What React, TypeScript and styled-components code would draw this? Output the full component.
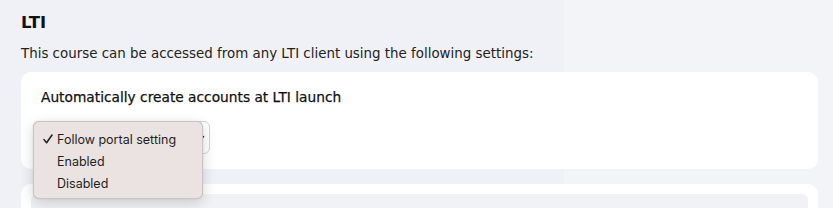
import styled, { createGlobalStyle } from "styled-components";

const GlobalStyle = createGlobalStyle`
  html, body {
    margin: 0;
    padding: 0;
  }
  body {
    background: linear-gradient(to right, #f0f1f6 0, #f0f1f6 564px, #f3f4f8 564px);
    font-family: "DejaVu Sans", "Open Sans", sans-serif;
    color: #1d1d1f;
  }
`;

const Page = styled.div`
  padding: 14px 15px 0 21px;
  height: 208px;
  box-sizing: border-box;
  overflow: hidden;
`;

const Heading = styled.h2`
  margin: 0;
  font-size: 16.5px;
  font-weight: 700;
  line-height: 18px;
  color: #111;
`;

const Intro = styled.p`
  margin: 13px 0 0;
  font-size: 13.4px;
  line-height: 18px;
  color: #222;
`;

const Card = styled.div`
  margin-top: 9px;
  background: #fff;
  border-radius: 10px;
  padding: 16px 20px 15px;
  position: relative;
`;

const Label = styled.div`
  font-size: 13.75px;
  font-weight: 400;
  line-height: 18px;
  color: #111;
  -webkit-text-stroke: 0.25px #111;
`;

const SelectWrap = styled.div`
  position: relative;
  margin-top: 15px;
  margin-left: -8px;
  width: 177px;
`;

const Select = styled.div`
  height: 33px;
  box-sizing: border-box;
  border: 1px solid #d5d5d8;
  border-radius: 6px;
  background: #fff;
  display: flex;
  align-items: center;
  justify-content: flex-end;
  padding-right: 4px;
  color: #222;
`;

const Menu = styled.ul`
  position: absolute;
  top: 0;
  left: 0;
  width: 170px;
  margin: 0;
  padding: 6px 0 4px;
  list-style: none;
  box-sizing: border-box;
  background: #ebe3e1;
  border: 1px solid rgba(0, 0, 0, 0.14);
  border-radius: 6px;
  box-shadow: 0 4px 14px rgba(0, 0, 0, 0.16), 0 0 2px rgba(0, 0, 0, 0.08);
  font-family: Inter, "Liberation Sans", sans-serif;
  font-size: 12.5px;
  color: #1f1f1f;
  z-index: 2;
`;

const Item = styled.li`
  display: flex;
  align-items: center;
  height: 22px;
  padding-left: 9px;
`;

const CheckSlot = styled.span`
  display: inline-flex;
  align-items: center;
  width: 14px;
  height: 22px;
`;

const options = ["Follow portal setting", "Enabled", "Disabled"];

const Card2 = styled.div`
  margin-top: 15px;
  background: #fff;
  border-radius: 10px 10px 0 0;
  padding: 10px 10px 0;
  height: 40px;
`;

const Inner = styled.div`
  background: #f1f2f6;
  border-radius: 6px 6px 0 0;
  height: 100%;
`;

const Chevron = () => (
  <svg width="8" height="8" viewBox="0 0 8 8">
    <path d="M1.5 2.5 L4 5.5 L6.5 2.5" fill="none" stroke="#222" strokeWidth="1.4" strokeLinecap="round" strokeLinejoin="round" />
  </svg>
);

const Check = () => (
  <svg width="10" height="10" viewBox="0 0 10 10">
    <path d="M1 5.6 L3.6 8.8 L9 1" fill="none" stroke="#1f1f1f" strokeWidth="1.5" strokeLinecap="round" strokeLinejoin="round" />
  </svg>
);

export default function App() {
  return (
    <>
      <GlobalStyle />
      <Page>
        <Heading>LTI</Heading>
        <Intro>This course can be accessed from any LTI client using the following settings:</Intro>
        <Card>
          <Label>Automatically create accounts at LTI launch</Label>
          <SelectWrap>
            <Select>
              <Chevron />
            </Select>
            <Menu>
              {options.map((o, i) => (
                <Item key={o}>
                  <CheckSlot>{i === 0 && <Check />}</CheckSlot>
                  {o}
                </Item>
              ))}
            </Menu>
          </SelectWrap>
        </Card>
        <Card2>
          <Inner />
        </Card2>
      </Page>
    </>
  );
}
